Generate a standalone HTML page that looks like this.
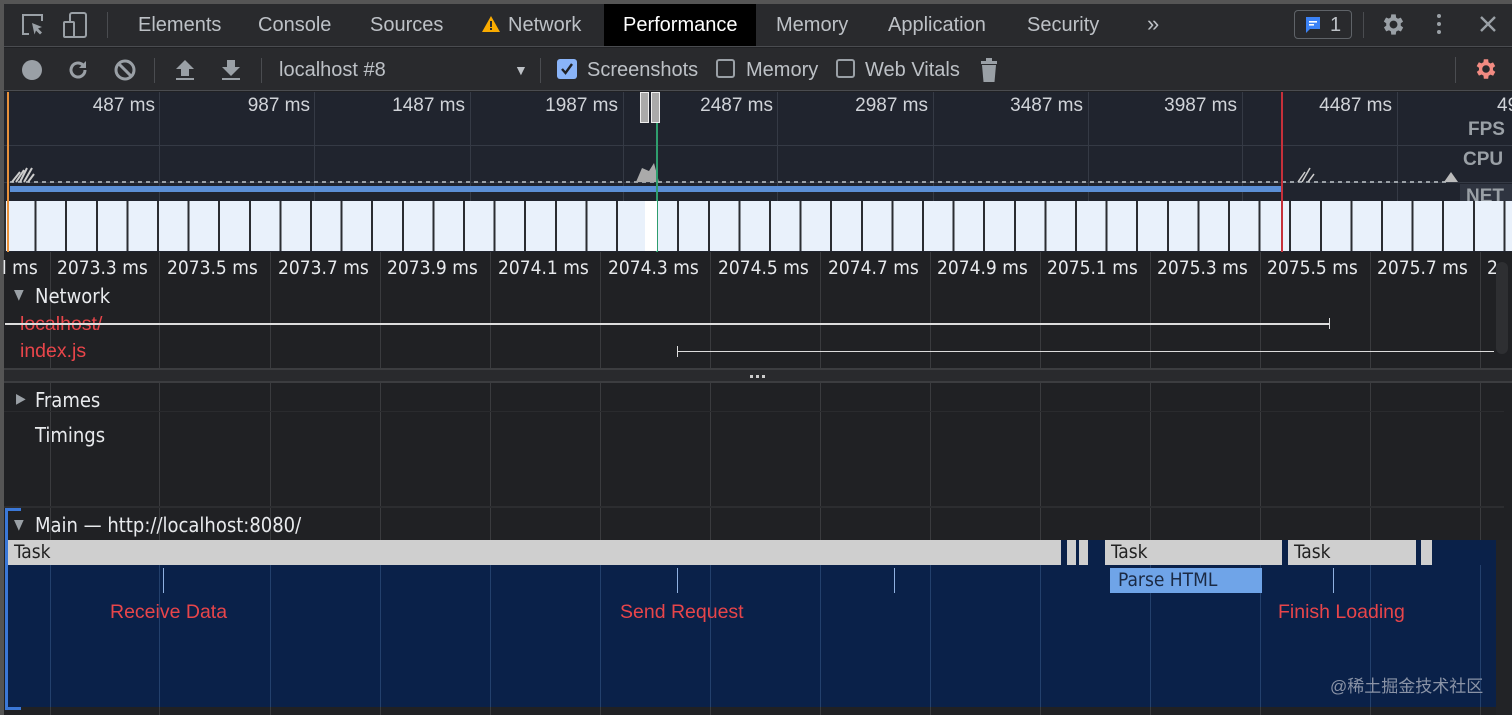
<!DOCTYPE html>
<html><head><meta charset="utf-8"><style>
*{margin:0;padding:0;box-sizing:border-box}
body{width:1512px;height:715px;overflow:hidden;background:#202124;font-family:"Liberation Sans",sans-serif;position:relative;color:#bdc1c6}
.a{position:absolute}
.tab{position:absolute;top:14px;font-size:20px;color:#bdc1c6}
.tb{position:absolute;top:59px;font-size:20px;color:#bdc1c6}
.ol{position:absolute;top:95px;font-size:19px;color:#d0d3d8;text-align:right}
.rl{position:absolute;top:257px;font-size:19px;color:#e8eaed;font-family:"DejaVu Sans Condensed","Liberation Sans",sans-serif}
.vg{position:absolute;width:1px;background:#3a3b3e}
.lab{position:absolute;font-size:20px;color:#e8eaed;font-family:"DejaVu Sans Condensed","Liberation Sans",sans-serif}
.task{position:absolute;top:540px;height:25px;background:#cfcfcf;font-size:19px;color:#222;padding:1px 6px;font-family:"DejaVu Sans Condensed","Liberation Sans",sans-serif}
.e{padding:0}
.red{position:absolute;color:#e8454a;font-size:19.5px}
.cb{position:absolute;top:59px;width:19px;height:19px;border:2px solid #9aa0a6;border-radius:3px}
</style></head><body>
<div class="a" style="left:0;top:0;width:1512px;height:4px;background:#555"></div>
<div class="a" style="left:0;top:0;width:4px;height:715px;background:#555"></div>
<div class="a" style="left:4px;top:4px;width:1508px;height:43px;background:#292a2d;border-bottom:1px solid #4a4c50"></div>
<svg class="a" style="left:20px;top:12px" width="28" height="28" viewBox="0 0 28 28"><path d="M9 22H3V3h19v6" fill="none" stroke="#9aa0a6" stroke-width="2"/><path d="M12 11l10 4-4 1.5 4 4-2 2-4-4-1.5 4z" fill="#9aa0a6"/></svg>
<svg class="a" style="left:62px;top:11px" width="28" height="28" viewBox="0 0 28 28"><rect x="8" y="2" width="16" height="24" rx="2" fill="none" stroke="#9aa0a6" stroke-width="2"/><rect x="2" y="11" width="10" height="15" rx="1" fill="#292a2d" stroke="#9aa0a6" stroke-width="2"/></svg>
<div class="a" style="left:107px;top:12px;width:1px;height:26px;background:#4a4c50"></div>
<div class="tab" style="left:138px">Elements</div>
<div class="tab" style="left:258px">Console</div>
<div class="tab" style="left:370px">Sources</div>
<svg class="a" style="left:482px;top:16px" width="18" height="16" viewBox="0 0 18 16"><path d="M9 0L18 16H0z" fill="#f9ab00"/><rect x="8" y="5" width="2" height="6" fill="#292a2d"/><rect x="8" y="12" width="2" height="2" fill="#292a2d"/></svg>
<div class="tab" style="left:508px">Network</div>
<div class="a" style="left:604px;top:4px;width:152px;height:42px;background:#000"></div>
<div class="tab" style="left:623px;color:#fff">Performance</div>
<div class="tab" style="left:776px">Memory</div>
<div class="tab" style="left:888px">Application</div>
<div class="tab" style="left:1027px">Security</div>
<div class="tab" style="left:1147px;font-size:22px;top:11px">»</div>
<div class="a" style="left:1294px;top:10px;width:58px;height:29px;border:1px solid #5f6368;border-radius:4px"></div>
<svg class="a" style="left:1305px;top:16px" width="16" height="18" viewBox="0 0 16 18"><path d="M1 1h14v12H5l-4 4z" fill="#3b82f6"/><rect x="4" y="5" width="8" height="1.6" fill="#fff"/><rect x="4" y="8" width="5" height="1.6" fill="#fff"/></svg>
<div class="tab" style="left:1330px">1</div>
<div class="a" style="left:1363px;top:12px;width:1px;height:26px;background:#4a4c50"></div>
<svg class="a" style="left:1380px;top:11px" width="27" height="27" viewBox="0 0 24 24"><path fill="#9aa0a6" d="M19.4 13a7.5 7.5 0 000-2l2.1-1.6-2-3.5-2.5 1a7 7 0 00-1.7-1L15 3h-4l-.4 2.8a7 7 0 00-1.7 1l-2.5-1-2 3.5L6.6 11a7.5 7.5 0 000 2l-2.1 1.6 2 3.5 2.5-1a7 7 0 001.7 1L11 21h4l.4-2.8a7 7 0 001.7-1l2.5 1 2-3.5zM13 15.5A3.5 3.5 0 1113 8.5a3.5 3.5 0 010 7z" transform="translate(-1 0)"/></svg>
<div class="a" style="left:1437px;top:14px;width:4px;height:4px;border-radius:2px;background:#9aa0a6;box-shadow:0 8px 0 #9aa0a6,0 16px 0 #9aa0a6"></div>
<svg class="a" style="left:1479px;top:15px" width="18" height="18" viewBox="0 0 18 18"><path d="M2 2l14 14M16 2L2 16" stroke="#9aa0a6" stroke-width="2.4"/></svg>
<div class="a" style="left:4px;top:48px;width:1508px;height:43px;background:#292a2d;border-bottom:1px solid #4a4c50"></div>
<div class="a" style="left:22px;top:60px;width:20px;height:20px;border-radius:50%;background:#9aa0a6"></div>
<svg class="a" style="left:66px;top:58px" width="24" height="24" viewBox="0 0 24 24"><path d="M19 12a7 7 0 11-2.2-5.1" fill="none" stroke="#9aa0a6" stroke-width="3"/><path d="M20 3v7h-7z" fill="#9aa0a6"/></svg>
<svg class="a" style="left:113px;top:58px" width="24" height="24" viewBox="0 0 24 24"><circle cx="12" cy="12" r="9" fill="none" stroke="#9aa0a6" stroke-width="3"/><path d="M6 6l12 12" stroke="#9aa0a6" stroke-width="3"/></svg>
<div class="a" style="left:154px;top:58px;width:1px;height:25px;background:#4a4c50"></div>
<svg class="a" style="left:174px;top:58px" width="22" height="24" viewBox="0 0 22 24"><path d="M11 2l9 9h-5v7H7v-7H2z" fill="#9aa0a6"/><rect x="2" y="20" width="18" height="2" fill="#9aa0a6"/></svg>
<svg class="a" style="left:220px;top:58px" width="22" height="24" viewBox="0 0 22 24"><path d="M11 18l9-9h-5V2H7v7H2z" fill="#9aa0a6"/><rect x="2" y="20" width="18" height="2" fill="#9aa0a6"/></svg>
<div class="a" style="left:261px;top:58px;width:1px;height:25px;background:#4a4c50"></div>
<div class="tb" style="left:279px">localhost #8</div>
<div class="tb" style="left:514px;font-size:14px;top:62px">▼</div>
<div class="a" style="left:540px;top:58px;width:1px;height:25px;background:#4a4c50"></div>
<div class="a" style="left:557px;top:59px;width:20px;height:20px;border-radius:3px;background:#8ab4f8"></div>
<svg class="a" style="left:559px;top:61px" width="16" height="16" viewBox="0 0 16 16"><path d="M3 8l3.5 4L13 3" fill="none" stroke="#202124" stroke-width="2.4"/></svg>
<div class="tb" style="left:587px">Screenshots</div>
<div class="cb" style="left:716px"></div>
<div class="tb" style="left:746px">Memory</div>
<div class="cb" style="left:836px"></div>
<div class="tb" style="left:865px">Web Vitals</div>
<svg class="a" style="left:979px;top:57px" width="20" height="26" viewBox="0 0 20 26"><rect x="7" y="1" width="6" height="3" fill="#9aa0a6"/><rect x="2" y="4" width="16" height="3" fill="#9aa0a6"/><path d="M3 8h14l-1.5 17h-11z" fill="#9aa0a6"/></svg>
<div class="a" style="left:1455px;top:57px;width:1px;height:26px;background:#4a4c50"></div>
<svg class="a" style="left:1473px;top:56px" width="26" height="26" viewBox="0 0 24 24"><path fill="#f28b82" d="M19.4 13a7.5 7.5 0 000-2l2.1-1.6-2-3.5-2.5 1a7 7 0 00-1.7-1L15 3h-4l-.4 2.8a7 7 0 00-1.7 1l-2.5-1-2 3.5L6.6 11a7.5 7.5 0 000 2l-2.1 1.6 2 3.5 2.5-1a7 7 0 001.7 1L11 21h4l.4-2.8a7 7 0 001.7-1l2.5 1 2-3.5zM13 15.5A3.5 3.5 0 1113 8.5a3.5 3.5 0 010 7z" transform="translate(-1 0)"/></svg>
<div class="a" style="left:4px;top:92px;width:1508px;height:160px;background:#20242e"></div>
<div class="a" style="left:4px;top:145px;width:1508px;height:1px;background:#353a45"></div>
<div class="a" style="left:4px;top:182px;width:1508px;height:1px;background:#353a45"></div>
<div class="vg" style="left:159px;top:92px;height:110px;background:#353a45"></div>
<div class="vg" style="left:314px;top:92px;height:110px;background:#353a45"></div>
<div class="vg" style="left:470px;top:92px;height:110px;background:#353a45"></div>
<div class="vg" style="left:623px;top:92px;height:110px;background:#353a45"></div>
<div class="vg" style="left:777px;top:92px;height:110px;background:#353a45"></div>
<div class="vg" style="left:933px;top:92px;height:110px;background:#353a45"></div>
<div class="vg" style="left:1088px;top:92px;height:110px;background:#353a45"></div>
<div class="vg" style="left:1242px;top:92px;height:110px;background:#353a45"></div>
<div class="vg" style="left:1397px;top:92px;height:110px;background:#353a45"></div>
<div class="ol" style="left:55px;width:100px">487 ms</div>
<div class="ol" style="left:210px;width:100px">987 ms</div>
<div class="ol" style="left:365px;width:100px">1487 ms</div>
<div class="ol" style="left:518px;width:100px">1987 ms</div>
<div class="ol" style="left:673px;width:100px">2487 ms</div>
<div class="ol" style="left:828px;width:100px">2987 ms</div>
<div class="ol" style="left:983px;width:100px">3487 ms</div>
<div class="ol" style="left:1137px;width:100px">3987 ms</div>
<div class="ol" style="left:1292px;width:100px">4487 ms</div>
<div class="ol" style="left:1497px;width:60px;text-align:left">4987</div>
<div class="a" style="left:1468px;top:119px;font-size:19px;font-weight:bold;color:#9aa0a6">FPS</div>
<div class="a" style="left:1463px;top:149px;font-size:19px;font-weight:bold;color:#9aa0a6">CPU</div>
<div class="a" style="left:1460px;top:184px;width:52px;height:22px;background:#2f3440"></div>
<div class="a" style="left:1466px;top:186px;font-size:19px;font-weight:bold;color:#9aa0a6">NET</div>
<div class="a" style="left:10px;top:181px;width:1440px;height:2px;background:repeating-linear-gradient(90deg,#9aa0a6 0 4px,transparent 4px 8px)"></div>
<svg class="a" style="left:10px;top:153px" width="30" height="30"><path d="M2 29l8-10M6 29l8-12M10 29l7-14M14 29l8-14M18 29l6-8" stroke="#ccc" stroke-width="2"/></svg>
<svg class="a" style="left:636px;top:163px" width="25" height="20"><path d="M0 19L6 5 13 8 18 0 23 19z" fill="#aaa"/></svg>
<svg class="a" style="left:1296px;top:166px" width="22" height="16"><path d="M2 16l7-10M6 16l8-14M12 16l6-8" stroke="#ccc" stroke-width="1.5"/></svg>
<svg class="a" style="left:1444px;top:172px" width="14" height="10"><path d="M0 10L7 0 14 10z" fill="#bbb"/></svg>
<div class="a" style="left:10px;top:186px;width:1272px;height:6px;background:#5b8fd6"></div>
<div class="a" style="left:4px;top:201px;width:1508px;height:50px;background:repeating-linear-gradient(90deg,#2b2d31 0 2px,#e9f1fb 2px 30.6px)"></div>
<div class="a" style="left:7px;top:92px;width:2px;height:160px;background:#e8913b"></div>
<div class="a" style="left:656px;top:92px;width:2px;height:160px;background:#2f9e6e"></div>
<div class="a" style="left:645px;top:201px;width:12px;height:50px;background:#fff"></div>
<div class="a" style="left:1281px;top:92px;width:2px;height:160px;background:#c6303a"></div>
<div class="a" style="left:640px;top:92px;width:9px;height:31px;background:#aaa;border:1px solid #eee"></div>
<div class="a" style="left:651px;top:92px;width:9px;height:31px;background:#aaa;border:1px solid #eee"></div>
<div class="a" style="left:4px;top:252px;width:1508px;height:31px;background:#202124"></div>
<div class="rl" style="left:2px">l ms</div>
<div class="rl" style="left:57px">2073.3 ms</div>
<div class="rl" style="left:167px">2073.5 ms</div>
<div class="rl" style="left:278px">2073.7 ms</div>
<div class="rl" style="left:387px">2073.9 ms</div>
<div class="rl" style="left:498px">2074.1 ms</div>
<div class="rl" style="left:608px">2074.3 ms</div>
<div class="rl" style="left:718px">2074.5 ms</div>
<div class="rl" style="left:828px">2074.7 ms</div>
<div class="rl" style="left:937px">2074.9 ms</div>
<div class="rl" style="left:1047px">2075.1 ms</div>
<div class="rl" style="left:1157px">2075.3 ms</div>
<div class="rl" style="left:1267px">2075.5 ms</div>
<div class="rl" style="left:1377px">2075.7 ms</div>
<div class="rl" style="left:1487px">2</div>
<div class="vg" style="left:50px;top:252px;height:463px"></div>
<div class="vg" style="left:159px;top:252px;height:463px"></div>
<div class="vg" style="left:270px;top:252px;height:463px"></div>
<div class="vg" style="left:380px;top:252px;height:463px"></div>
<div class="vg" style="left:490px;top:252px;height:463px"></div>
<div class="vg" style="left:600px;top:252px;height:463px"></div>
<div class="vg" style="left:710px;top:252px;height:463px"></div>
<div class="vg" style="left:820px;top:252px;height:463px"></div>
<div class="vg" style="left:930px;top:252px;height:463px"></div>
<div class="vg" style="left:1040px;top:252px;height:463px"></div>
<div class="vg" style="left:1150px;top:252px;height:463px"></div>
<div class="vg" style="left:1260px;top:252px;height:463px"></div>
<div class="vg" style="left:1370px;top:252px;height:463px"></div>
<div class="vg" style="left:1480px;top:252px;height:463px"></div>
<div class="lab" style="left:14px;top:287px;font-size:14px;color:#9aa0a6">▼</div>
<div class="lab" style="left:35px;top:284px">Network</div>
<div class="red" style="left:20px;top:313px;text-decoration:line-through">localhost/</div>
<div class="a" style="left:5px;top:323px;width:1325px;height:2px;background:#ddd"></div>
<div class="a" style="left:1329px;top:318px;width:1px;height:11px;background:#ddd"></div>
<div class="red" style="left:20px;top:340px">index.js</div>
<div class="a" style="left:677px;top:351px;width:817px;height:1px;background:#ddd"></div>
<div class="a" style="left:677px;top:346px;width:1px;height:11px;background:#ddd"></div>
<div class="a" style="left:1496px;top:262px;width:12px;height:92px;border-radius:6px;background:#2e2f32"></div>
<div class="a" style="left:4px;top:368px;width:1508px;height:15px;background:#292a2d;border-top:2px solid #3c3d40;border-bottom:2px solid #3c3d40"></div>
<div class="a" style="left:750px;top:375px;width:3px;height:3px;background:#ccc;box-shadow:6px 0 #ccc,12px 0 #ccc"></div>
<div class="lab" style="left:16px;top:391px;font-size:14px;color:#9aa0a6">▶</div>
<div class="lab" style="left:35px;top:388px">Frames</div>
<div class="a" style="left:4px;top:411px;width:1500px;height:1px;background:#2a2b2e"></div>
<div class="lab" style="left:35px;top:423px">Timings</div>
<div class="a" style="left:4px;top:506px;width:1500px;height:2px;background:#2c2d30"></div>
<div class="lab" style="left:14px;top:517px;font-size:14px;color:#9aa0a6">▼</div>
<div class="lab" style="left:35px;top:513px">Main — http://localhost:8080/</div>
<div class="a" style="left:8px;top:540px;width:1488px;height:167px;background:#0a2149"></div>
<div class="vg" style="left:50px;top:565px;height:142px;background:#23406c"></div>
<div class="vg" style="left:159px;top:565px;height:142px;background:#23406c"></div>
<div class="vg" style="left:270px;top:565px;height:142px;background:#23406c"></div>
<div class="vg" style="left:380px;top:565px;height:142px;background:#23406c"></div>
<div class="vg" style="left:490px;top:565px;height:142px;background:#23406c"></div>
<div class="vg" style="left:600px;top:565px;height:142px;background:#23406c"></div>
<div class="vg" style="left:710px;top:565px;height:142px;background:#23406c"></div>
<div class="vg" style="left:820px;top:565px;height:142px;background:#23406c"></div>
<div class="vg" style="left:930px;top:565px;height:142px;background:#23406c"></div>
<div class="vg" style="left:1040px;top:565px;height:142px;background:#23406c"></div>
<div class="vg" style="left:1150px;top:565px;height:142px;background:#23406c"></div>
<div class="vg" style="left:1260px;top:565px;height:142px;background:#23406c"></div>
<div class="vg" style="left:1370px;top:565px;height:142px;background:#23406c"></div>
<div class="vg" style="left:1480px;top:565px;height:142px;background:#23406c"></div>
<div class="a" style="left:5px;top:508px;width:3px;height:202px;background:#3b78d8"></div>
<div class="a" style="left:5px;top:508px;width:16px;height:3px;background:#3b78d8"></div>
<div class="a" style="left:5px;top:707px;width:16px;height:3px;background:#3b78d8"></div>
<div class="task" style="left:8px;width:1053px">Task</div>
<div class="task e" style="left:1067px;width:9px"></div>
<div class="task e" style="left:1079px;width:9px"></div>
<div class="task" style="left:1105px;width:177px">Task</div>
<div class="task" style="left:1288px;width:128px">Task</div>
<div class="task e" style="left:1421px;width:11px"></div>
<div class="a" style="left:1110px;top:568px;width:152px;height:25px;background:#6fa4e8;font-size:19px;color:#1b2a44;padding:1px 8px;font-family:'DejaVu Sans Condensed','Liberation Sans',sans-serif">Parse HTML</div>
<div class="a" style="left:163px;top:568px;width:1px;height:25px;background:#8fb0e0"></div>
<div class="a" style="left:677px;top:568px;width:1px;height:25px;background:#8fb0e0"></div>
<div class="a" style="left:894px;top:568px;width:1px;height:25px;background:#8fb0e0"></div>
<div class="a" style="left:1333px;top:568px;width:1px;height:25px;background:#8fb0e0"></div>
<div class="red" style="left:110px;top:601px">Receive Data</div>
<div class="red" style="left:620px;top:601px">Send Request</div>
<div class="red" style="left:1278px;top:601px">Finish Loading</div>
<div class="a" style="left:1330px;top:672px;font-size:17px;color:#8a93a6;font-family:'Liberation Sans','Noto Sans CJK SC',sans-serif">@稀土掘金技术社区</div>
<div class="a" style="left:1496px;top:540px;width:16px;height:175px;background:#222326"></div>
</body></html>
